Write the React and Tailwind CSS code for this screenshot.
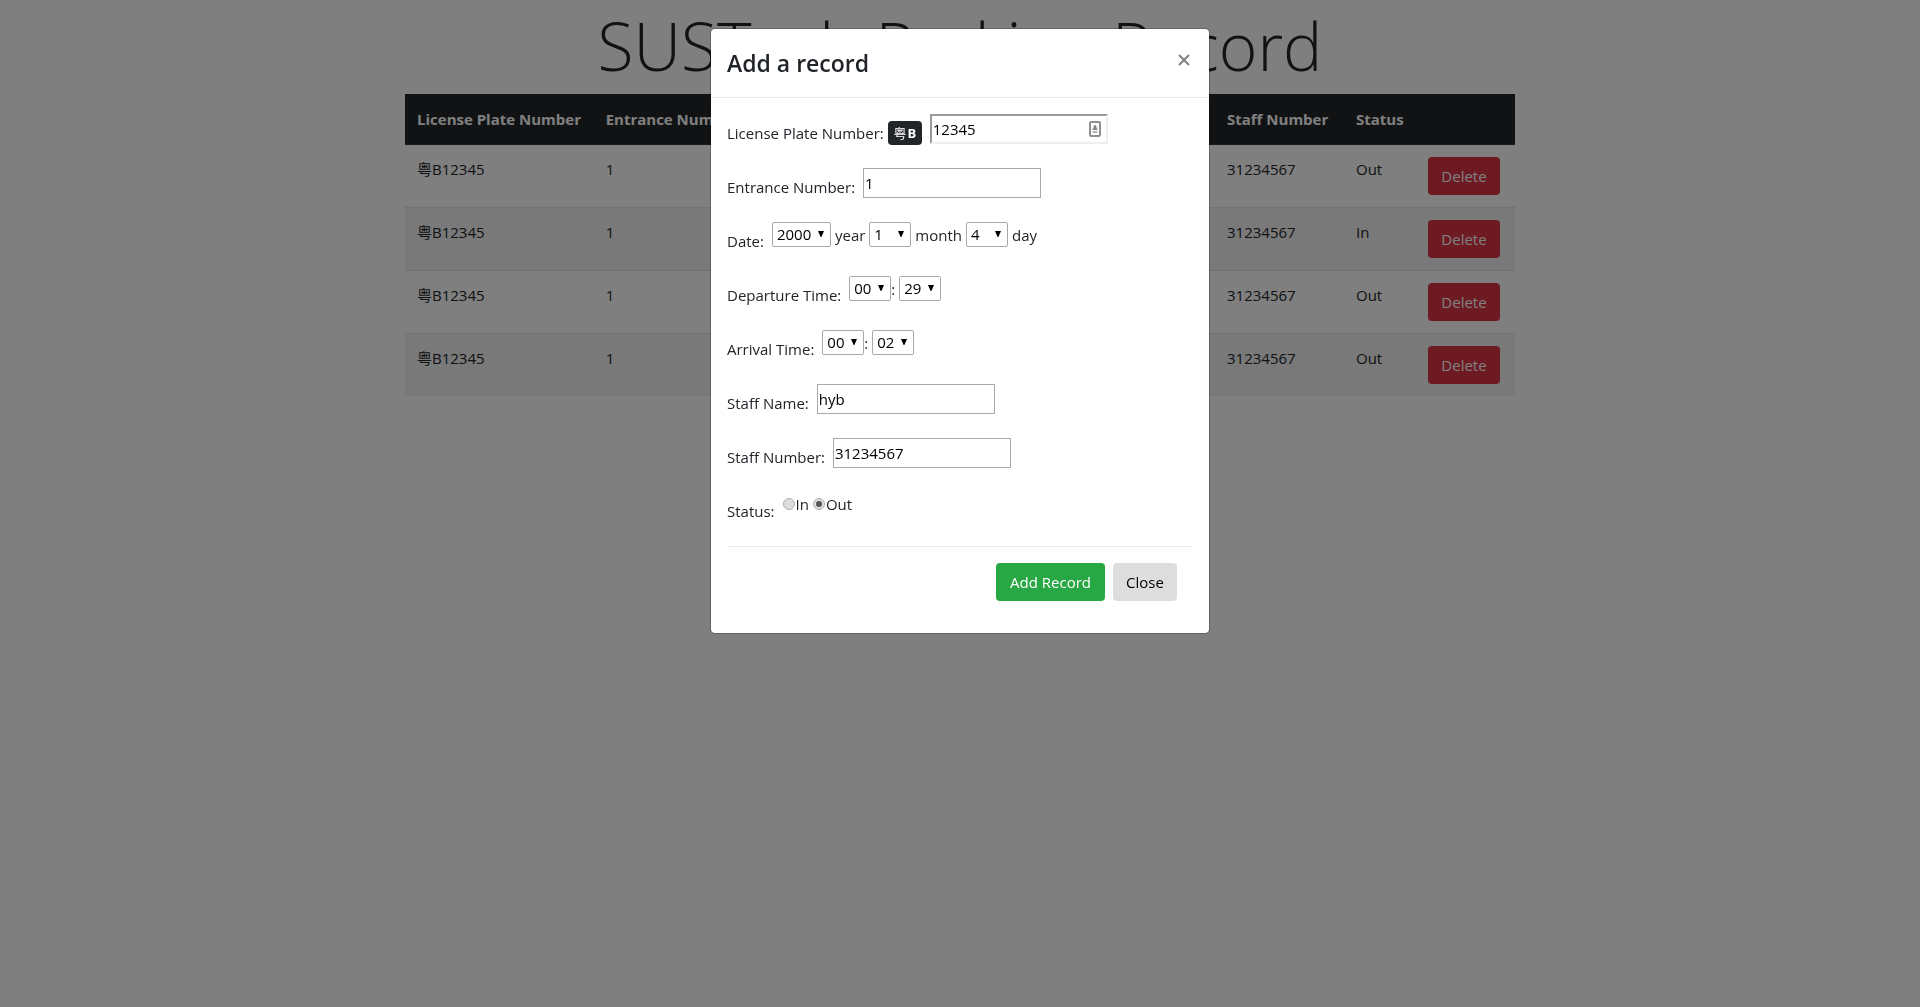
import React from "react";

const records = [
  { plate: "粤B12345", entrance: "1", status: "Out" },
  { plate: "粤B12345", entrance: "1", status: "In" },
  { plate: "粤B12345", entrance: "1", status: "Out" },
  { plate: "粤B12345", entrance: "1", status: "Out" },
];

function Field({ id, label, badge, children }) {
  return (
    <div className="mb-4 flex h-[38px] items-start gap-2">
      <div className="mt-[7px] flex items-center gap-1">
        <label htmlFor={id} className="whitespace-nowrap">
          {label}
        </label>
        {badge}
      </div>
      {children}
    </div>
  );
}

function TextInput({ id, value }) {
  return (
    <input
      id={id}
      type="text"
      defaultValue={value}
      className="h-[30px] w-[178px] border border-[#a9a9a9] bg-white px-px text-black outline-none"
    />
  );
}

function Select({ id, label, value, wide }) {
  return (
    <span className="relative inline-flex">
      <select
        id={id}
        aria-label={label}
        defaultValue={value}
        className={
          (wide ? "w-[59px]" : "w-[42px]") +
          " h-[25px] appearance-none rounded-[2px] border border-[#a9a9a9] bg-white pl-1 leading-[23px] text-black outline-none"
        }
      >
        <option>{value}</option>
      </select>
      <svg
        viewBox="0 0 6 6"
        className="pointer-events-none absolute top-[9px] right-[7px] h-[6px] w-[6px] fill-black"
        aria-hidden="true"
      >
        <path d="M0 0H6L3.4 6H2.6Z" />
      </svg>
    </span>
  );
}

function Radio({ id, label, checked }) {
  return (
    <span className="flex items-center">
      <input
        id={id}
        type="radio"
        name="status"
        defaultChecked={checked}
        className="grid h-3 w-3 appearance-none place-content-center rounded-full border border-[#b0b0b0] bg-[#dddddd] before:h-[6px] before:w-[6px] before:rounded-full checked:before:bg-[#555555]"
      />
      <label htmlFor={id} className="pl-px">
        {label}
      </label>
    </span>
  );
}

export default function App() {
  return (
    <div className="min-h-screen bg-white font-['Open_Sans','Noto_Sans_CJK_SC',sans-serif] text-[15px] leading-6 text-[#212529]">
      <main className="mx-auto w-full max-w-[1140px] px-[15px]">
        <h1 className="mb-1.5 pt-0.5 text-center text-[66px] leading-[86px] font-light whitespace-nowrap">
          SUSTech Parking Record
        </h1>
        <table className="w-full table-fixed border-collapse text-left">
          <colgroup>
            <col className="w-[17%]" />
            <col className="w-[14%]" />
            <col className="w-[10%]" />
            <col className="w-[11%]" />
            <col className="w-[11%]" />
            <col className="w-[10%]" />
            <col className="w-[129px]" />
            <col className="w-[72px]" />
            <col className="w-[99px]" />
          </colgroup>
          <thead className="bg-[#212529] text-white">
            <tr className="h-[50px] border-b border-[#32383e]">
              <th className="px-3 font-bold whitespace-nowrap">License Plate Number</th>
              <th className="px-3 font-bold whitespace-nowrap">Entrance Number</th>
              <th className="px-3 font-bold">Date</th>
              <th className="px-3 font-bold">Departure</th>
              <th className="px-3 font-bold">Arrival</th>
              <th className="px-3 font-bold">Staff</th>
              <th className="px-3 font-bold whitespace-nowrap">Staff Number</th>
              <th className="px-3 font-bold">Status</th>
              <th />
            </tr>
          </thead>
          <tbody>
            {records.map((r, i) => (
              <tr key={i} className="h-[63px] border-t border-[#dee2e6] align-top first:border-t-0 even:bg-[#f2f2f2]">
                <td className="p-3">{r.plate}</td>
                <td className="p-3">{r.entrance}</td>
                <td className="p-3">2000-1-4</td>
                <td className="p-3">00:29</td>
                <td className="p-3">00:02</td>
                <td className="p-3">hyb</td>
                <td className="p-3">31234567</td>
                <td className="p-3">{r.status}</td>
                <td className="p-3">
                  <button type="button" className="h-[38px] w-[72px] rounded bg-[#dc3545] text-white">
                    Delete
                  </button>
                </td>
              </tr>
            ))}
          </tbody>
        </table>
      </main>

      <div className="fixed inset-0 overflow-y-auto bg-black/50">
        <div
          role="dialog"
          aria-modal="true"
          aria-labelledby="dialog-title"
          className="mx-auto my-7 w-full max-w-[500px] rounded-[5px] border border-black/20 bg-white bg-clip-padding"
        >
          <div className="flex items-start justify-between border-b border-[#e9ecef] p-4">
            <h2 id="dialog-title" className="text-[23px] leading-9 font-semibold">
              Add a record
            </h2>
            <button type="button" aria-label="Close dialog" className="mt-[9px] mr-[3px] text-[#7f7f7f]">
              <svg viewBox="0 0 12 12" className="h-3 w-3 fill-none stroke-current stroke-2" aria-hidden="true">
                <path d="M1 1L11 11M11 1L1 11" />
              </svg>
            </button>
          </div>

          <form className="p-4" onSubmit={(e) => e.preventDefault()}>
            <Field
              id="plate"
              label="License Plate Number:"
              badge={
                <span className="flex h-6 w-[34px] items-center justify-center gap-px rounded bg-[#212529] text-[13px] font-bold text-white">
                  <span className="font-normal">粤</span>B
                </span>
              }
            >
              <span className="relative inline-flex">
                <input
                  id="plate"
                  type="text"
                  defaultValue="12345"
                  className="h-[30px] w-[178px] border-2 border-t-[#9a9a9a] border-r-[#eeeeee] border-b-[#eeeeee] border-l-[#9a9a9a] bg-white px-px text-black outline-none"
                />
                <svg viewBox="0 0 12 16" className="pointer-events-none absolute top-[7px] right-[7px] h-4 w-3" aria-hidden="true">
                  <rect x="1" y="1" width="10" height="14" rx="1" className="fill-white stroke-[#8f8f8f] stroke-2" />
                  <path d="M6 3.5L7.5 5.5V7.5H8.5V9H3.5V7.5H4.5V5.5Z" fill="#858585" />
                  <path d="M3.5 10H8.5V12H3.5Z" fill="#b5b5b5" />
                </svg>
              </span>
            </Field>

            <Field id="entrance" label="Entrance Number:">
              <TextInput id="entrance" value="1" />
            </Field>

            <Field id="year" label="Date:">
              <div className="flex items-center gap-1">
                <Select id="year" label="Year" value="2000" wide />
                <span>year</span>
                <Select id="month" label="Month" value="1" />
                <span>month</span>
                <Select id="day" label="Day" value="4" />
                <span>day</span>
              </div>
            </Field>

            <Field id="departure-hour" label="Departure Time:">
              <div className="flex items-center gap-1">
                <span className="flex items-center">
                  <Select id="departure-hour" label="Departure hour" value="00" />:
                </span>
                <Select id="departure-minute" label="Departure minute" value="29" />
              </div>
            </Field>

            <Field id="arrival-hour" label="Arrival Time:">
              <div className="flex items-center gap-1">
                <span className="flex items-center">
                  <Select id="arrival-hour" label="Arrival hour" value="00" />:
                </span>
                <Select id="arrival-minute" label="Arrival minute" value="02" />
              </div>
            </Field>

            <Field id="staff-name" label="Staff Name:">
              <TextInput id="staff-name" value="hyb" />
            </Field>

            <Field id="staff-number" label="Staff Number:">
              <TextInput id="staff-number" value="31234567" />
            </Field>

            <Field id="status-in" label="Status:">
              <div className="flex gap-1">
                <Radio id="status-in" label="In" />
                <Radio id="status-out" label="Out" checked />
              </div>
            </Field>

            <div className="flex justify-end gap-2 border-t border-[#e9ecef] p-4">
              <button type="submit" className="h-[38px] w-[109px] rounded bg-[#28a745] text-white">
                Add Record
              </button>
              <button type="button" className="h-[38px] w-16 rounded bg-[#dddddd] text-black">
                Close
              </button>
            </div>
          </form>
        </div>
      </div>
    </div>
  );
}
